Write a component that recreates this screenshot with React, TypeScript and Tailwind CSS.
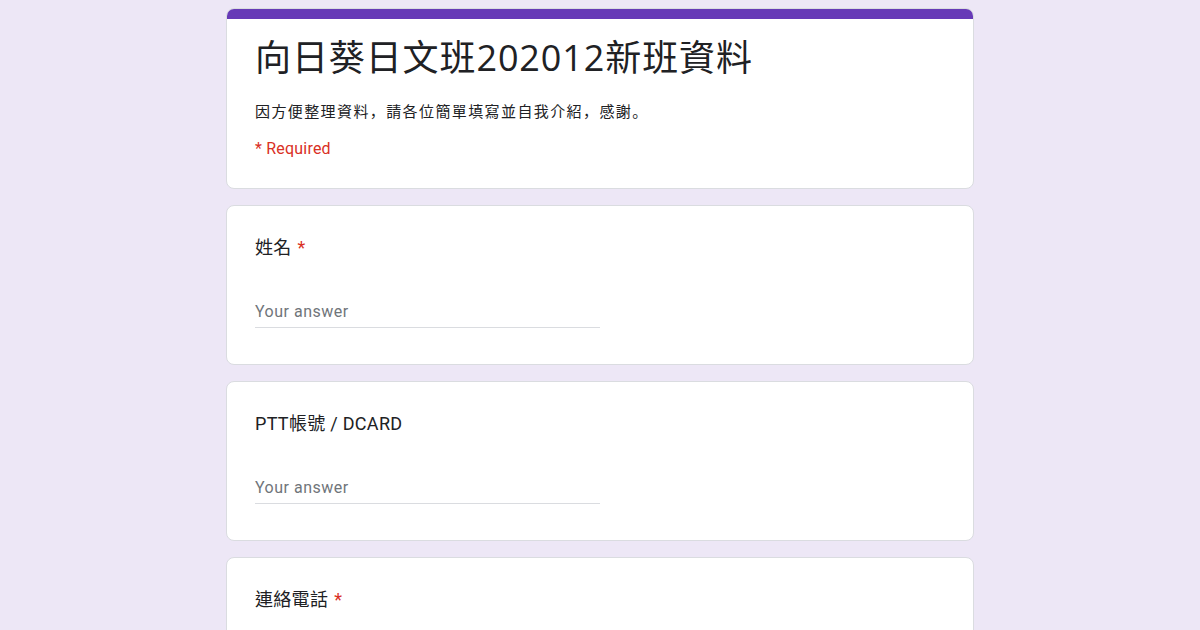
const CJK = "font-['Roboto','Noto_Sans_CJK_TC',sans-serif]";

function Question({ label, required }: { label: string; required?: boolean }) {
  return (
    <div className="bg-white rounded-lg border border-[#dadce0] px-[28px] pt-[28px] pb-[36px]">
      <div className="text-[18px] leading-[28px] text-[#202124] tracking-[0.3px]">
        {label}
        {required && <span className="text-[#d93025] ml-[6px]">*</span>}
      </div>
      <div className="mt-[38px] w-[345px] border-b border-[#dadce0] pb-[3px]">
        <span className="text-[16px] leading-[24px] text-[#70757a] tracking-[0.5px]">Your answer</span>
      </div>
    </div>
  );
}

export default function App() {
  return (
    <div className={`min-h-screen bg-[#ede7f6] ${CJK}`}>
      <div className="w-[748px] mx-auto pt-[8px] flex flex-col gap-[16px]">
        {/* Header */}
        <div className="bg-white rounded-lg border border-[#dadce0] overflow-hidden">
          <div className="h-[10px] bg-[#673ab7]" />
          <div className="px-[28px] pt-[17px] pb-[27px]">
            <h1 className="text-[36px] leading-[44px] text-[#202124] tracking-[0.9px] font-['Open_Sans','Noto_Sans_CJK_TC',sans-serif]">
              向日葵日文班202012新班資料
            </h1>
            <p className="mt-[22px] text-[15px] leading-[20px] text-[#202124] tracking-[1.4px] font-['Roboto','Noto_Sans_CJK_JP',sans-serif]">
              因方便整理資料，請各位簡單填寫並自我介紹，感謝。
            </p>
            <p className="mt-[15px] text-[16px] leading-[24px] text-[#d93025] tracking-[0.2px]">* Required</p>
          </div>
        </div>

        <Question label="姓名" required />
        <Question label="PTT帳號 / DCARD" />
        <Question label="連絡電話" required />
      </div>
    </div>
  );
}
